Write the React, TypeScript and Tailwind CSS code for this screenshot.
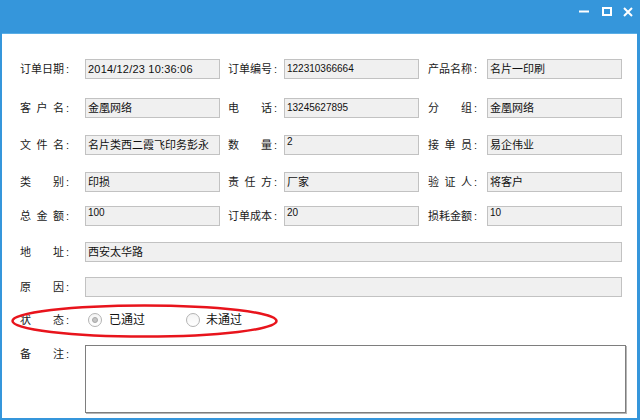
import React from "react";

type Field = {
  label: string[];
  value: string;
  kind?: "cn" | "num" | "top" | "date";
};

const rows: { mt: string; fields: Field[] }[] = [
  {
    mt: "mt-0",
    fields: [
      { label: ["订", "单", "日", "期"], value: "2014/12/23 10:36:06", kind: "date" },
      { label: ["订", "单", "编", "号"], value: "122310366664", kind: "num" },
      { label: ["产", "品", "名", "称"], value: "名片一印刷" },
    ],
  },
  {
    mt: "mt-[19px]",
    fields: [
      { label: ["客", "户", "名"], value: "金凰网络" },
      { label: ["电", "话"], value: "13245627895", kind: "num" },
      { label: ["分", "组"], value: "金凰网络" },
    ],
  },
  {
    mt: "mt-[17px]",
    fields: [
      { label: ["文", "件", "名"], value: "名片类西二霞飞印务彭永" },
      { label: ["数", "量"], value: "2", kind: "top" },
      { label: ["接", "单", "员"], value: "易企伟业" },
    ],
  },
  {
    mt: "mt-[17px]",
    fields: [
      { label: ["类", "别"], value: "印损" },
      { label: ["责", "任", "方"], value: "厂家" },
      { label: ["验", "证", "人"], value: "将客户" },
    ],
  },
  {
    mt: "mt-[14px]",
    fields: [
      { label: ["总", "金", "额"], value: "100", kind: "top" },
      { label: ["订", "单", "成", "本"], value: "20", kind: "top" },
      { label: ["损", "耗", "金", "额"], value: "10", kind: "top" },
    ],
  },
];

function Label({ chars, className = "" }: { chars: string[]; className?: string }) {
  return (
    <div className={`flex items-center shrink-0 text-[11px] text-[#1a1a1a] ${className}`}>
      <span className="flex w-[44px] justify-between">
        {chars.map((c, i) => (
          <span key={i}>{c}</span>
        ))}
      </span>
      <span className="ml-[2px]">:</span>
    </div>
  );
}

function Box({ value, kind = "cn", className = "w-[135px]" }: { value: string; kind?: Field["kind"]; className?: string }) {
  const text =
    kind === "date"
      ? "items-center text-[11px] tracking-[0.2px]"
      : kind === "num"
        ? "items-center text-[10px]"
        : kind === "top"
          ? "items-start pt-[1px] text-[10px]"
          : "items-center text-[11px]";
  return (
    <div className={`flex h-[20px] shrink-0 border border-[#c2c2c2] bg-[#f0f0f0] pl-[2px] leading-none text-[#111] ${text} ${className}`}>
      {value}
    </div>
  );
}

function Radio({ checked }: { checked?: boolean }) {
  return (
    <span className="flex h-[14px] w-[14px] items-center justify-center rounded-full border border-[#b3b3b3] bg-gradient-to-b from-[#f4f4f4] to-[#ffffff]">
      {checked && <span className="h-[6px] w-[6px] rounded-full bg-[#c4c4c4] border border-[#a8a8a8]" />}
    </span>
  );
}

export default function App() {
  const labelW = ["w-[65px]", "ml-[8px] w-[56px]", "ml-[9px] w-[59px]"];

  return (
    <div className="flex h-[420px] w-[640px] flex-col bg-[#3596db] pb-[2px] pl-[2px] pr-[3px] font-['Liberation_Sans','Noto_Sans_CJK_SC',sans-serif]">
      <div className="flex h-[34px] shrink-0 items-start justify-end border-b border-[#5aaee6] pt-[7px] pr-[4px]">
        <svg width="10" height="10" viewBox="0 0 10 10" className="mt-[0px]">
          <rect x="0" y="3.5" width="10" height="2" fill="#fff" />
        </svg>
        <svg width="10" height="10" viewBox="0 0 10 10" className="ml-[13px]">
          <rect x="1" y="1" width="8" height="7" fill="none" stroke="#fff" strokeWidth="2" />
        </svg>
        <svg width="10" height="10" viewBox="0 0 10 10" className="ml-[11px]">
          <path d="M1 1 L9 9 M9 1 L1 9" stroke="#fff" strokeWidth="2" />
        </svg>
      </div>

      <div className="relative flex flex-1 flex-col bg-white pl-[18px] pt-[25px]">
        {rows.map((row, r) => (
          <div key={r} className={`flex h-[20px] ${row.mt}`}>
            {row.fields.map((f, i) => (
              <React.Fragment key={i}>
                <Label chars={f.label} className={labelW[i]} />
                <Box value={f.value} kind={f.kind} />
              </React.Fragment>
            ))}
          </div>
        ))}

        <div className="mt-[16px] flex h-[20px]">
          <Label chars={["地", "址"]} className="w-[65px]" />
          <Box value="西安太华路" className="w-[537px]" />
        </div>

        <div className="mt-[15px] flex h-[20px]">
          <Label chars={["原", "因"]} className="w-[65px]" />
          <Box value="" className="w-[537px]" />
        </div>

        <div className="mt-[13px] flex h-[20px] items-center">
          <Label chars={["状", "态"]} className="w-[65px]" />
          <div className="ml-[3px] flex w-[98px] items-center">
            <Radio checked />
            <span className="ml-[7px] text-[12px] text-[#111]">已通过</span>
          </div>
          <div className="flex items-center">
            <Radio />
            <span className="ml-[6px] text-[12px] text-[#111]">未通过</span>
          </div>
        </div>

        <div className="mt-[15px] flex">
          <Label chars={["备", "注"]} className="w-[65px] h-[16px] mt-[1px] self-start" />
          <div className="h-[68px] w-[541px] border border-[#7e7e7e] bg-white shadow-[1px_1px_0_#b5b5b5]" />
        </div>

        <svg
          className="pointer-events-none absolute left-[8px] top-[268px]"
          width="274"
          height="38"
          viewBox="0 0 274 38"
        >
          <ellipse cx="134.5" cy="19" rx="132" ry="15.5" fill="none" stroke="#e8141c" strokeWidth="2.5" />
        </svg>
      </div>
    </div>
  );
}
